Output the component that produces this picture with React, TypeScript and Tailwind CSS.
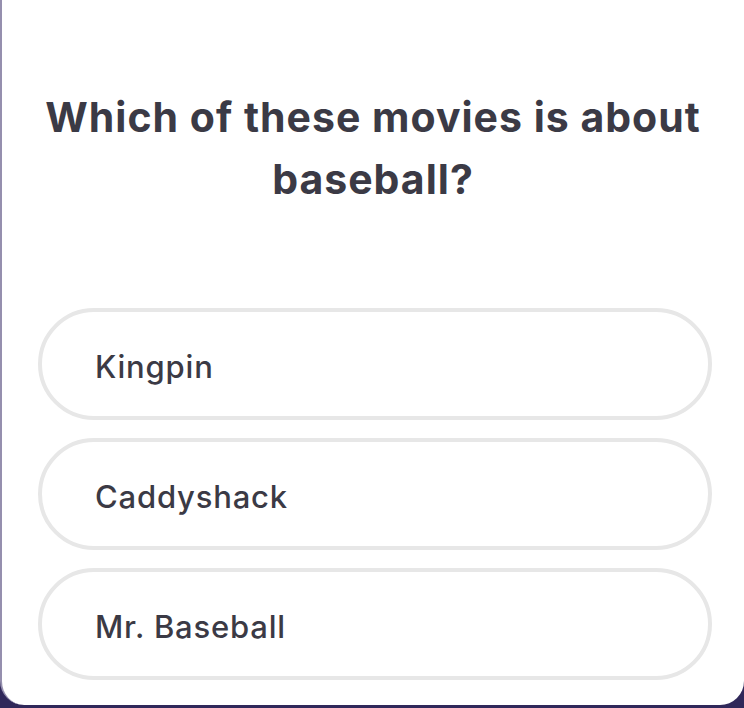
import React from 'react';

const OPTIONS = ['Kingpin', 'Caddyshack', 'Mr. Baseball'];

export default function App() {
  return (
    <div className="w-[744px] h-[708px] bg-[#30285a] overflow-hidden" style={{ fontFamily: 'Inter, "Noto Sans", sans-serif' }}>
      <div className="h-[705px] bg-white rounded-b-[24px] border-l-[2px] border-[#958fae] flex flex-col">
        <h1 className="mt-[86px] px-4 text-center text-[41px] leading-[62px] font-bold text-[#3b3a45] tracking-[1px]">
          Which of these movies is about baseball?
        </h1>
        <div className="mt-[98px] flex flex-col gap-[18px] pl-[36px] pr-[32px]">
          {OPTIONS.map(o => (
            <div
              key={o}
              className="h-[112px] rounded-[56px] border-[4px] border-[#e7e7e7] flex items-center pl-[53px] pt-[6px] text-[31px] font-medium text-[#3b3a45] tracking-[0.8px]"
            >
              {o}
            </div>
          ))}
        </div>
      </div>
    </div>
  );
}
